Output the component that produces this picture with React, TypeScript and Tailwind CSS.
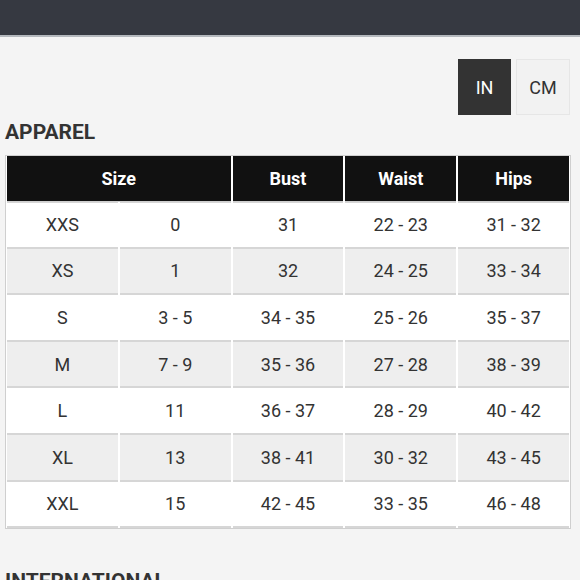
import React from 'react'

const rows = [
  ['XXS', '0', '31', '22 - 23', '31 - 32'],
  ['XS', '1', '32', '24 - 25', '33 - 34'],
  ['S', '3 - 5', '34 - 35', '25 - 26', '35 - 37'],
  ['M', '7 - 9', '35 - 36', '27 - 28', '38 - 39'],
  ['L', '11', '36 - 37', '28 - 29', '40 - 42'],
  ['XL', '13', '38 - 41', '30 - 32', '43 - 45'],
  ['XXL', '15', '42 - 45', '33 - 35', '46 - 48'],
]

export default function App() {
  return (
    <div
      className="w-[580px] h-[580px] overflow-hidden bg-[#f4f4f4] text-[#333]"
      style={{ fontFamily: 'Roboto, "Liberation Sans", sans-serif' }}
    >
      {/* top bar */}
      <div className="h-[37px] bg-[#363941] border-b-2 border-[#b4b8bd]" />

      {/* unit toggle */}
      <div className="flex justify-end gap-[5px] pr-[10px] mt-[22px]">
        <button className="w-[53px] h-[56px] bg-[#333] text-white text-[18px]">IN</button>
        <button className="w-[54px] h-[56px] bg-[#f2f2f2] border border-[#e6e6e6] text-[#333] text-[18px]">
          CM
        </button>
      </div>

      <h2 className="mt-[5px] ml-[5px] text-[21px] leading-[25px] font-bold">APPAREL</h2>

      {/* size table */}
      <div className="mt-[10px] ml-[5px] w-[566px] bg-white border border-[#cfcfcf] px-px">
        <div className="grid grid-cols-5 gap-x-[2px] h-[46px]">
          <div className="col-span-2 bg-[#111] text-white font-bold text-[18px] flex items-center justify-center border-b border-[#cfcfcf]">
            Size
          </div>
          {['Bust', 'Waist', 'Hips'].map((h) => (
            <div
              key={h}
              className="bg-[#111] text-white font-bold text-[18px] flex items-center justify-center border-b border-[#cfcfcf]"
            >
              {h}
            </div>
          ))}
        </div>
        {rows.map((r, i) => (
          <div key={r[0]} className="grid grid-cols-5 gap-x-[2px]">
            {r.map((c, j) => (
              <div
                key={j}
                className={`h-[46.6px] flex items-center justify-center text-[18px] text-[#333] ${
                  i === 0 ? 'border-t border-[#d6d6d6]' : ''
                } border-b-2 border-[#d6d6d6] ${i % 2 === 1 ? 'bg-[#eeeeee]' : 'bg-white'}`}
              >
                {c}
              </div>
            ))}
          </div>
        ))}
      </div>

      <h2 className="mt-[40px] ml-[5px] text-[21px] leading-[25px] font-bold">INTERNATIONAL</h2>
    </div>
  )
}
